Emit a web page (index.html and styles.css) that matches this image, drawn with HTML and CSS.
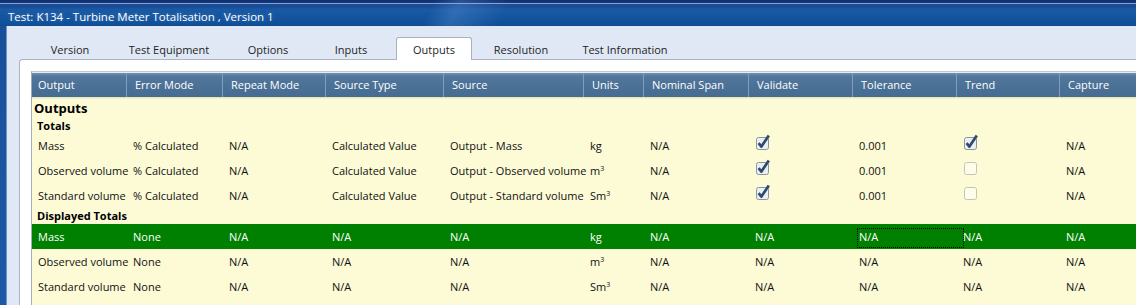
FILE: index.html
```html
<!DOCTYPE html>
<html>
<head>
  <title>Test: K134 - Turbine Meter Totalisation</title>
  <meta charset="utf-8">
  <link rel="stylesheet" href="styles.css">
</head>
<body>
  <!-- window -->
  <div class="window">
    <div class="titlebar">Test: K134 - Turbine Meter Totalisation , Version 1</div>
    <div class="client">
      <ul class="tabs">
        <li class="tab">Version</li>
        <li class="tab">Test Equipment</li>
        <li class="tab">Options</li>
        <li class="tab">Inputs</li>
        <li class="tab active">Outputs</li>
        <li class="tab">Resolution</li>
        <li class="tab">Test Information</li>
      </ul>
      <div class="panel">
        <div class="grid">
          <div class="row head">
            <div class="cell">Output</div>
            <div class="cell">Error Mode</div>
            <div class="cell">Repeat Mode</div>
            <div class="cell">Source Type</div>
            <div class="cell">Source</div>
            <div class="cell">Units</div>
            <div class="cell">Nominal Span</div>
            <div class="cell">Validate</div>
            <div class="cell">Tolerance</div>
            <div class="cell">Trend</div>
            <div class="cell">Capture</div>
          </div>

          <div class="group">Outputs</div>
          <div class="subgroup">Totals</div>

          <div class="row">
            <div class="cell">Mass</div>
            <div class="cell">% Calculated</div>
            <div class="cell">N/A</div>
            <div class="cell">Calculated Value</div>
            <div class="cell">Output - Mass</div>
            <div class="cell">kg</div>
            <div class="cell">N/A</div>
            <div class="cell"><svg class="check" viewBox="0 0 16 16" width="16" height="16"><rect class="box on" x="1.5" y="3.5" width="12" height="12" rx="2"/><path class="mark" d="M3.6 9.2 L6.4 12.6 L13.8 1.6"/></svg></div>
            <div class="cell">0.001</div>
            <div class="cell"><svg class="check" viewBox="0 0 16 16" width="16" height="16"><rect class="box on" x="1.5" y="3.5" width="12" height="12" rx="2"/><path class="mark" d="M3.6 9.2 L6.4 12.6 L13.8 1.6"/></svg></div>
            <div class="cell">N/A</div>
          </div>
          <div class="row">
            <div class="cell">Observed volume</div>
            <div class="cell">% Calculated</div>
            <div class="cell">N/A</div>
            <div class="cell">Calculated Value</div>
            <div class="cell">Output - Observed volume</div>
            <div class="cell">m<sup class="pow">3</sup></div>
            <div class="cell">N/A</div>
            <div class="cell"><svg class="check" viewBox="0 0 16 16" width="16" height="16"><rect class="box on" x="1.5" y="3.5" width="12" height="12" rx="2"/><path class="mark" d="M3.6 9.2 L6.4 12.6 L13.8 1.6"/></svg></div>
            <div class="cell">0.001</div>
            <div class="cell"><svg class="check" viewBox="0 0 16 16" width="16" height="16"><rect class="box" x="1.5" y="3.5" width="12" height="12" rx="2"/></svg></div>
            <div class="cell">N/A</div>
          </div>
          <div class="row">
            <div class="cell">Standard volume</div>
            <div class="cell">% Calculated</div>
            <div class="cell">N/A</div>
            <div class="cell">Calculated Value</div>
            <div class="cell">Output - Standard volume</div>
            <div class="cell">Sm<sup class="pow">3</sup></div>
            <div class="cell">N/A</div>
            <div class="cell"><svg class="check" viewBox="0 0 16 16" width="16" height="16"><rect class="box on" x="1.5" y="3.5" width="12" height="12" rx="2"/><path class="mark" d="M3.6 9.2 L6.4 12.6 L13.8 1.6"/></svg></div>
            <div class="cell">0.001</div>
            <div class="cell"><svg class="check" viewBox="0 0 16 16" width="16" height="16"><rect class="box" x="1.5" y="3.5" width="12" height="12" rx="2"/></svg></div>
            <div class="cell">N/A</div>
          </div>

          <div class="subgroup second">Displayed Totals</div>

          <div class="row selected">
            <div class="cell">Mass</div>
            <div class="cell">None</div>
            <div class="cell">N/A</div>
            <div class="cell">N/A</div>
            <div class="cell">N/A</div>
            <div class="cell">kg</div>
            <div class="cell">N/A</div>
            <div class="cell">N/A</div>
            <div class="cell focused">N/A</div>
            <div class="cell">N/A</div>
            <div class="cell">N/A</div>
          </div>
          <div class="row">
            <div class="cell">Observed volume</div>
            <div class="cell">None</div>
            <div class="cell">N/A</div>
            <div class="cell">N/A</div>
            <div class="cell">N/A</div>
            <div class="cell">m<sup class="pow">3</sup></div>
            <div class="cell">N/A</div>
            <div class="cell">N/A</div>
            <div class="cell">N/A</div>
            <div class="cell">N/A</div>
            <div class="cell">N/A</div>
          </div>
          <div class="row">
            <div class="cell">Standard volume</div>
            <div class="cell">None</div>
            <div class="cell">N/A</div>
            <div class="cell">N/A</div>
            <div class="cell">N/A</div>
            <div class="cell">Sm<sup class="pow">3</sup></div>
            <div class="cell">N/A</div>
            <div class="cell">N/A</div>
            <div class="cell">N/A</div>
            <div class="cell">N/A</div>
            <div class="cell">N/A</div>
          </div>
        </div>
      </div>
    </div>
  </div>
  <!-- end of window -->
</body>
</html>
```

FILE: styles.css
```css
* {
  box-sizing: border-box;
}
html,
body {
  margin: 0;
  padding: 0;
}
body {
  width: 1136px;
  height: 305px;
  overflow: hidden;
  font-family: "Open Sans", "Noto Sans", sans-serif;
  font-size: 11px;
  color: #111;
  background:
    linear-gradient(115deg, transparent 0, transparent 34%, rgba(120, 170, 235, 0.25) 36%, transparent 40%, transparent 100%),
    linear-gradient(to bottom, #0f2e6c 0, #17397c 3px, #7ea6dc 3px, #7ea6dc 4px, #1b4a92 4px, #1c4f98 8px, #195aa6 9px, #0f4f96 25px, #0b468a 26px, #1a4f98 26px, #1d5aa6 100%);
}
.window {
  display: flex;
  flex-direction: column;
  height: 305px;
}
.titlebar {
  height: 26px;
  padding: 8px 0 0 8px;
  line-height: 17px;
  font-size: 11.5px;
  color: #fff;
  text-shadow: 0 0 5px rgba(190, 215, 255, 0.35);
  white-space: nowrap;
}
.client {
  flex: 1;
  display: flex;
  flex-direction: column;
  min-width: 0;
  margin-left: 7px;
  background: #dfe8f4;
  box-shadow: -1px 0 0 #6a95cd;
}

/* tabs */
.tabs {
  display: flex;
  align-items: flex-end;
  height: 33px;
  margin: 0;
  padding: 0 0 0 23px;
  list-style: none;
}
.tab {
  height: 23px;
  margin-bottom: -1px;
  padding-top: 2px;
  line-height: 21px;
  text-align: center;
  white-space: nowrap;
  color: #1e1e1e;
}
.tab:nth-child(1) { width: 80px; }
.tab:nth-child(2) { width: 118px; }
.tab:nth-child(3) { width: 80px; }
.tab:nth-child(4) { width: 86px; }
.tab:nth-child(6) { width: 94px; }
.tab:nth-child(7) { width: 114px; }
.tab.active {
  position: relative;
  z-index: 1;
  width: 76px;
  margin: 0 2px -1px;
  padding-top: 1px;
  background: #fff;
  border: 1px solid #a8b3c1;
  border-bottom: 0;
  border-radius: 3px 3px 0 0;
}

/* panel + grid */
.panel {
  flex: 1;
  min-width: 0;
  margin-left: 12px;
  padding: 11px 0 0 11px;
  background: #fff;
  border-top: 1px solid #aab5c3;
  border-left: 1px solid #aab5c3;
  border-top-left-radius: 4px;
}
.grid {
  height: 100%;
  background: #fcfbd6;
  border-top: 1px solid #c2c8ce;
  border-left: 1px solid #a4adb7;
}
.row {
  display: grid;
  grid-template-columns: 94px 96px 103px 118px 140px 60px 105px 104px 104px 103px minmax(0, 1fr);
  height: 25px;
  line-height: 25px;
}
.cell {
  min-width: 0;
  padding-left: 7px;
  white-space: nowrap;
}
.cell:first-child {
  padding-left: 6px;
}
.head {
  position: relative;
  border-top: 1px solid #e4eaf1;
  line-height: 24px;
  color: #fff;
  background: linear-gradient(to bottom, #7393b4 0, #52779c 3px, #4a7095 60%, #466c91 100%);
  box-shadow: 0 1px 2px rgba(90, 90, 60, 0.18);
}
.head .cell {
  padding-left: 8px;
  border-left: 1px solid #819dba;
}
.head .cell:first-child {
  padding-left: 6px;
  border-left: 0;
}
.group {
  height: 21px;
  padding: 2px 0 0 2px;
  line-height: 19px;
  font-size: 13px;
  font-weight: 700;
  color: #000;
}
.subgroup {
  height: 15px;
  padding-left: 5px;
  line-height: 15px;
  font-weight: 700;
  color: #000;
}
.subgroup.second {
  height: 16px;
  line-height: 16px;
}
.row.selected {
  background: #008000;
  color: #fff;
}
.focused {
  position: relative;
}
.focused::after {
  content: "";
  position: absolute;
  left: 5px;
  top: 4px;
  width: 105px;
  height: 18px;
  border: 1px dotted #000;
}
.check {
  display: block;
  margin-top: 1px;
}
.box {
  fill: #fdfde9;
  stroke: #c4c4bb;
  stroke-width: 1;
}
.box.on {
  fill: #eceff2;
  stroke: #8a95a2;
}
.mark {
  fill: none;
  stroke: #2e4b6b;
  stroke-width: 2.7;
  stroke-linejoin: round;
}
.pow {
  font-size: 7px;
  line-height: 0;
  vertical-align: 4px;
}
```
